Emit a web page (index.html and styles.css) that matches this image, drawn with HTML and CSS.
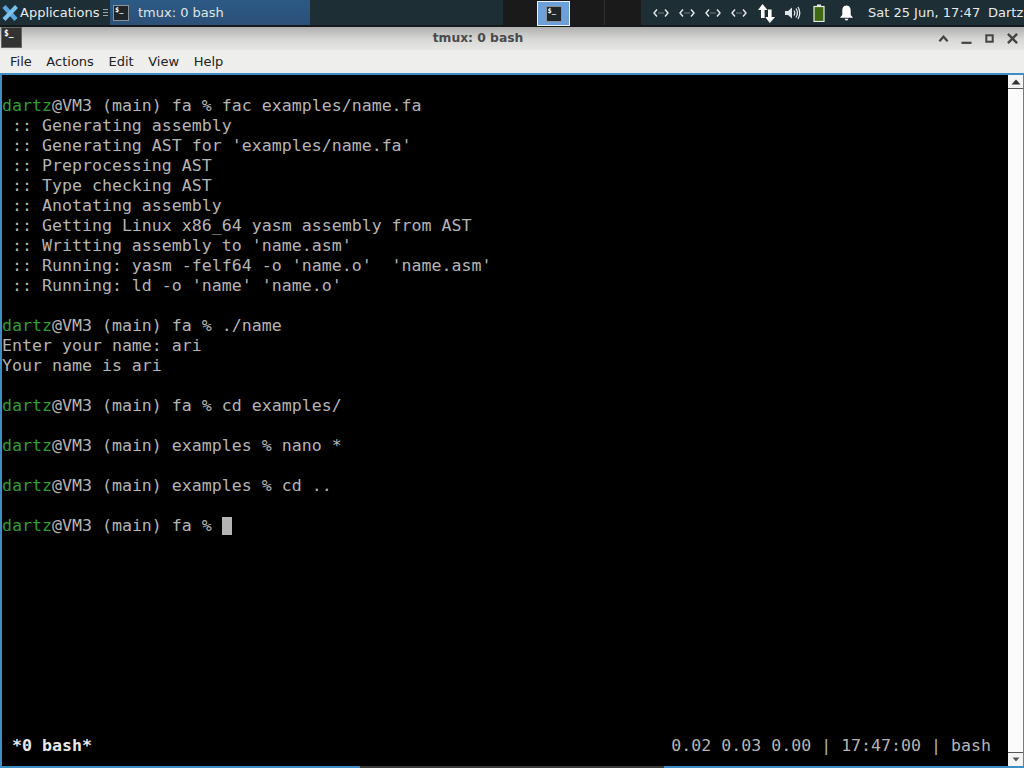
FILE: index.html
```html
<!DOCTYPE html>
<html lang="en">
<head>
<meta charset="utf-8">
<title>tmux: 0 bash</title>
<link rel="stylesheet" href="styles.css">
</head>
<body>
<header class="panel">
  <div class="apps">
    <svg width="18" height="18" viewBox="0 0 18 18"><path d="M3 2.5 L15 15.5" stroke="#5aa6de" stroke-width="4.4"/><path d="M15.5 2.5 L3 15.5" stroke="#7cc4ec" stroke-width="4"/></svg>
    <span class="apps-label">Applications</span>
    <span class="apps-sep"><i></i><i></i><i></i></span>
  </div>
  <div class="task">
    <span class="term-icon small"><b>$_</b></span>
    <span class="task-label">tmux: 0 bash</span>
  </div>
  <div class="spacer"></div>
  <div class="pager-wrap">
    <div class="pager"><span class="term-icon small"><b>$_</b></span></div>
  </div>
  <div class="pager-end"></div>
  <div class="tray">
    <div class="tray-icons">
      <svg class="net" width="16" height="16" viewBox="0 0 16 16"><path d="M4 4.5 L1 8 L4 11.5 M12 4.5 L15 8 L12 11.5" fill="none" stroke="#e8ecee" stroke-width="1.4"/><path d="M5.5 8 H10.5" stroke="#c8d0d4" stroke-width="1.2" stroke-dasharray="1 1"/></svg>
      <svg class="net" width="16" height="16" viewBox="0 0 16 16"><path d="M4 4.5 L1 8 L4 11.5 M12 4.5 L15 8 L12 11.5" fill="none" stroke="#e8ecee" stroke-width="1.4"/><path d="M5.5 8 H10.5" stroke="#c8d0d4" stroke-width="1.2" stroke-dasharray="1 1"/></svg>
      <svg class="net" width="16" height="16" viewBox="0 0 16 16"><path d="M4 4.5 L1 8 L4 11.5 M12 4.5 L15 8 L12 11.5" fill="none" stroke="#e8ecee" stroke-width="1.4"/><path d="M5.5 8 H10.5" stroke="#c8d0d4" stroke-width="1.2" stroke-dasharray="1 1"/></svg>
      <svg class="net" width="16" height="16" viewBox="0 0 16 16"><path d="M4 4.5 L1 8 L4 11.5 M12 4.5 L15 8 L12 11.5" fill="none" stroke="#e8ecee" stroke-width="1.4"/><path d="M5.5 8 H10.5" stroke="#c8d0d4" stroke-width="1.2" stroke-dasharray="1 1"/></svg>
      <svg class="arrows" width="20" height="20" viewBox="0 0 20 20"><path d="M5.5 1 L10.5 7 H7.6 V15 H4 V7 H1 Z" fill="#fff"/><path d="M11 6.5 H14.6 V14 H18 L12.8 20 L8.2 14 H11 Z" fill="#fff"/></svg>
      <svg class="vol" width="17" height="18" viewBox="0 0 17 18"><path d="M1 7 H4 L8 3.5 V14.5 L4 11 H1 Z" fill="#dfe4e6"/><path d="M10 6.5 Q11.5 9 10 11.5 M12 4.5 Q14.8 9 12 13.5 M14 3 Q17.5 9 14 15" fill="none" stroke="#dfe4e6" stroke-width="1.3"/></svg>
      <svg class="batt" width="12" height="18" viewBox="0 0 12 18"><rect x="4" y="0.5" width="4" height="2" fill="#e8ece4"/><rect x="1" y="2.5" width="10" height="15" fill="#3f6a12" stroke="#e8ece4" stroke-width="1.2"/></svg>
      <svg class="bell" width="15" height="18" viewBox="0 0 16 18"><path d="M8 1 C11.5 1 12.5 4 12.5 7 V11 L15 14 H1 L3.5 11 V7 C3.5 4 4.5 1 8 1 Z" fill="#fff"/><path d="M6 15 H10 Q9.5 17 8 17 Q6.5 17 6 15 Z" fill="#fff"/></svg>
    </div>
    <span class="clock">Sat 25 Jun, 17:47</span>
    <span class="user">Dartz</span>
  </div>
</header>

<div class="titlebar">
  <span class="term-icon large"><b>$_</b></span>
  <span class="title">tmux: 0 bash</span>
  <div class="win-btns">
    <svg width="11" height="11" viewBox="0 0 12 12"><path d="M1.5 9 L6 4 L10.5 9" fill="none" stroke="#444" stroke-width="2.4"/></svg>
    <svg width="11" height="11" viewBox="0 0 12 12"><rect x="0.5" y="9.5" width="11" height="2.4" fill="#444"/></svg>
    <svg width="11" height="11" viewBox="0 0 12 12"><rect x="2.5" y="2.5" width="7" height="7" fill="none" stroke="#444" stroke-width="2.2"/></svg>
    <svg width="11" height="11" viewBox="0 0 12 12"><path d="M1 1 L11 11 M11 1 L1 11" stroke="#444" stroke-width="2.6"/></svg>
  </div>
</div>

<nav class="menubar">
  <span>File</span><span>Actions</span><span>Edit</span><span>View</span><span>Help</span>
</nav>

<main class="terminal-frame">
  <div class="terminal">
    <pre class="output">

<span class="g">dartz</span>@VM3 (main) fa % fac examples/name.fa
 :: Generating assembly
 :: Generating AST for 'examples/name.fa'
 :: Preprocessing AST
 :: Type checking AST
 :: Anotating assembly
 :: Getting Linux x86_64 yasm assembly from AST
 :: Writting assembly to 'name.asm'
 :: Running: yasm -felf64 -o 'name.o'  'name.asm'
 :: Running: ld -o 'name' 'name.o'

<span class="g">dartz</span>@VM3 (main) fa % ./name
Enter your name: ari
Your name is ari

<span class="g">dartz</span>@VM3 (main) fa % cd examples/

<span class="g">dartz</span>@VM3 (main) examples % nano *

<span class="g">dartz</span>@VM3 (main) examples % cd ..

<span class="g">dartz</span>@VM3 (main) fa % <span class="cursor"> </span></pre>
    <div class="status">
      <span class="status-left">*0 bash*</span>
      <span class="status-right">0.02 0.03 0.00 | 17:47:00 | bash</span>
    </div>
  </div>
  <div class="scrollbar">
    <div class="arrow"><svg width="10" height="6" viewBox="0 0 10 6"><path d="M5 0.5 L9.5 5.5 H0.5 Z" fill="#333"/></svg></div>
    <div class="track"></div>
    <div class="arrow"><svg width="8" height="5" viewBox="0 0 8 5"><path d="M0.5 0.5 H7.5 L4 4.5 Z" fill="#555"/></svg></div>
  </div>
</main>
</body>
</html>
```
FILE: styles.css
```css
* { box-sizing: border-box; }
html, body { margin: 0; padding: 0; }
body {
  width: 1024px;
  height: 768px;
  overflow: hidden;
  display: flex;
  flex-direction: column;
  background: #000;
  font-family: "DejaVu Sans", sans-serif;
}
.panel {
  height: 27px;
  flex: none;
  display: flex;
  align-items: stretch;
  background: #1d2e35;
  border-bottom: 2px solid #15191b;
  color: #e6eaec;
  font-size: 13px;
}
.apps {
  width: 110px;
  display: flex;
  align-items: center;
  padding-left: 1px;
  gap: 1px;
}
.apps-label { color: #e8ecee; }
.apps-sep { display: flex; flex-direction: column; gap: 2px; margin-left: 3px; }
.apps-sep i { display: block; width: 5px; height: 1px; background: #9aa5aa; }
.task {
  width: 200px;
  display: flex;
  align-items: center;
  padding-left: 3px;
  background: linear-gradient(#2c5a85, #2c5078);
  color: #dfe6ea;
  gap: 9px;
}
.spacer { flex: 1; }
.pager-wrap {
  width: 102px;
  padding-left: 34px;
  display: flex;
  align-items: flex-start;
  background: #1b1a1a;
  border-right: 1px solid #303030;
}
.pager-end { width: 36px; background: #1b1a1a; }
.pager {
  width: 33px;
  height: 25px;
  margin-top: 1px;
  background: #6d9fd8;
  border: 1px solid #e8f0f8;
  display: flex;
  align-items: center;
  justify-content: center;
}
.term-icon {
  display: inline-flex;
  background: #1e262a;
  border: 1px solid #8a9296;
  color: #fff;
  font-family: "DejaVu Sans Mono", monospace;
  font-weight: bold;
  line-height: 1;
  align-items: flex-start;
  flex: none;
}
.term-icon b { display: block; }
.term-icon.small { width: 16px; height: 16px; font-size: 7px; padding: 1px; }
.term-icon.large { width: 21px; height: 21px; font-size: 8px; padding: 2px; margin-left: 1px; align-self: flex-start; background: #333; border-color: #666; }
.tray {
  width: 383px;
  display: flex;
  align-items: center;
  padding-left: 12px;
}
.tray-icons { display: flex; align-items: center; width: 215px; flex: none; }
.tray-icons svg { flex: none; }
.net { margin-right: 10px; }
.arrows { margin-right: 7px; }
.vol { margin-right: 12px; }
.batt { margin-right: 14px; }
.clock { width: 120px; flex: none; white-space: nowrap; }
.user { white-space: nowrap; }

.titlebar {
  height: 23px;
  flex: none;
  display: flex;
  align-items: center;
  background: linear-gradient(#b0b0ae, #d8d8d6 55%, #e6e6e4);
}
.title {
  flex: 1;
  text-align: center;
  font-size: 12.3px;
  font-weight: bold;
  color: #4a4a4a;
  padding: 0 4px 2px 0;
}
.win-btns {
  display: flex;
  align-items: center;
  gap: 12px;
  padding-right: 6px;
}
.menubar {
  height: 23px;
  flex: none;
  display: flex;
  align-items: center;
  padding-left: 10px;
  gap: 14.6px;
  background: #eeeeec;
  font-size: 13px;
  color: #222;
}
.terminal-frame {
  flex: 1;
  min-height: 0;
  display: flex;
  padding: 2px 1px 2px 2px;
  background: linear-gradient(90deg, #3d8ec4 360px, #3a3a3a 360px, #3a3a3a 664px, #3d8ec4 664px) bottom / 100% 2px no-repeat, #3d8ec4;
}
.terminal {
  flex: 1;
  min-width: 0;
  background: #000;
  display: flex;
  flex-direction: column;
  justify-content: space-between;
  color: #b4b4b4;
  font-family: "DejaVu Sans Mono", monospace;
  font-size: 16.6px;
  line-height: 20px;
}
.output {
  margin: 1px 0 0;
  font: inherit;
  white-space: pre;
}
.g { color: #2f9e2f; }
.cursor { display: inline-block; width: 10px; height: 18px; background: #b4b4b4; vertical-align: -1px; }
.status {
  display: flex;
  justify-content: space-between;
  padding: 0 17px 10px 10px;
}
.status-left { color: #e8e8e8; font-weight: bold; }
.scrollbar {
  width: 15px;
  flex: none;
  display: flex;
  flex-direction: column;
  background: #f2f2f2;
}
.arrow { height: 14px; display: flex; align-items: center; justify-content: center; background: #f4f4f4; border-bottom: 1px solid #555; }
.arrow:last-child { border-bottom: 0; border-top: 1px solid #555; }
.track { flex: 1; background: #fbfbfb; }
```
